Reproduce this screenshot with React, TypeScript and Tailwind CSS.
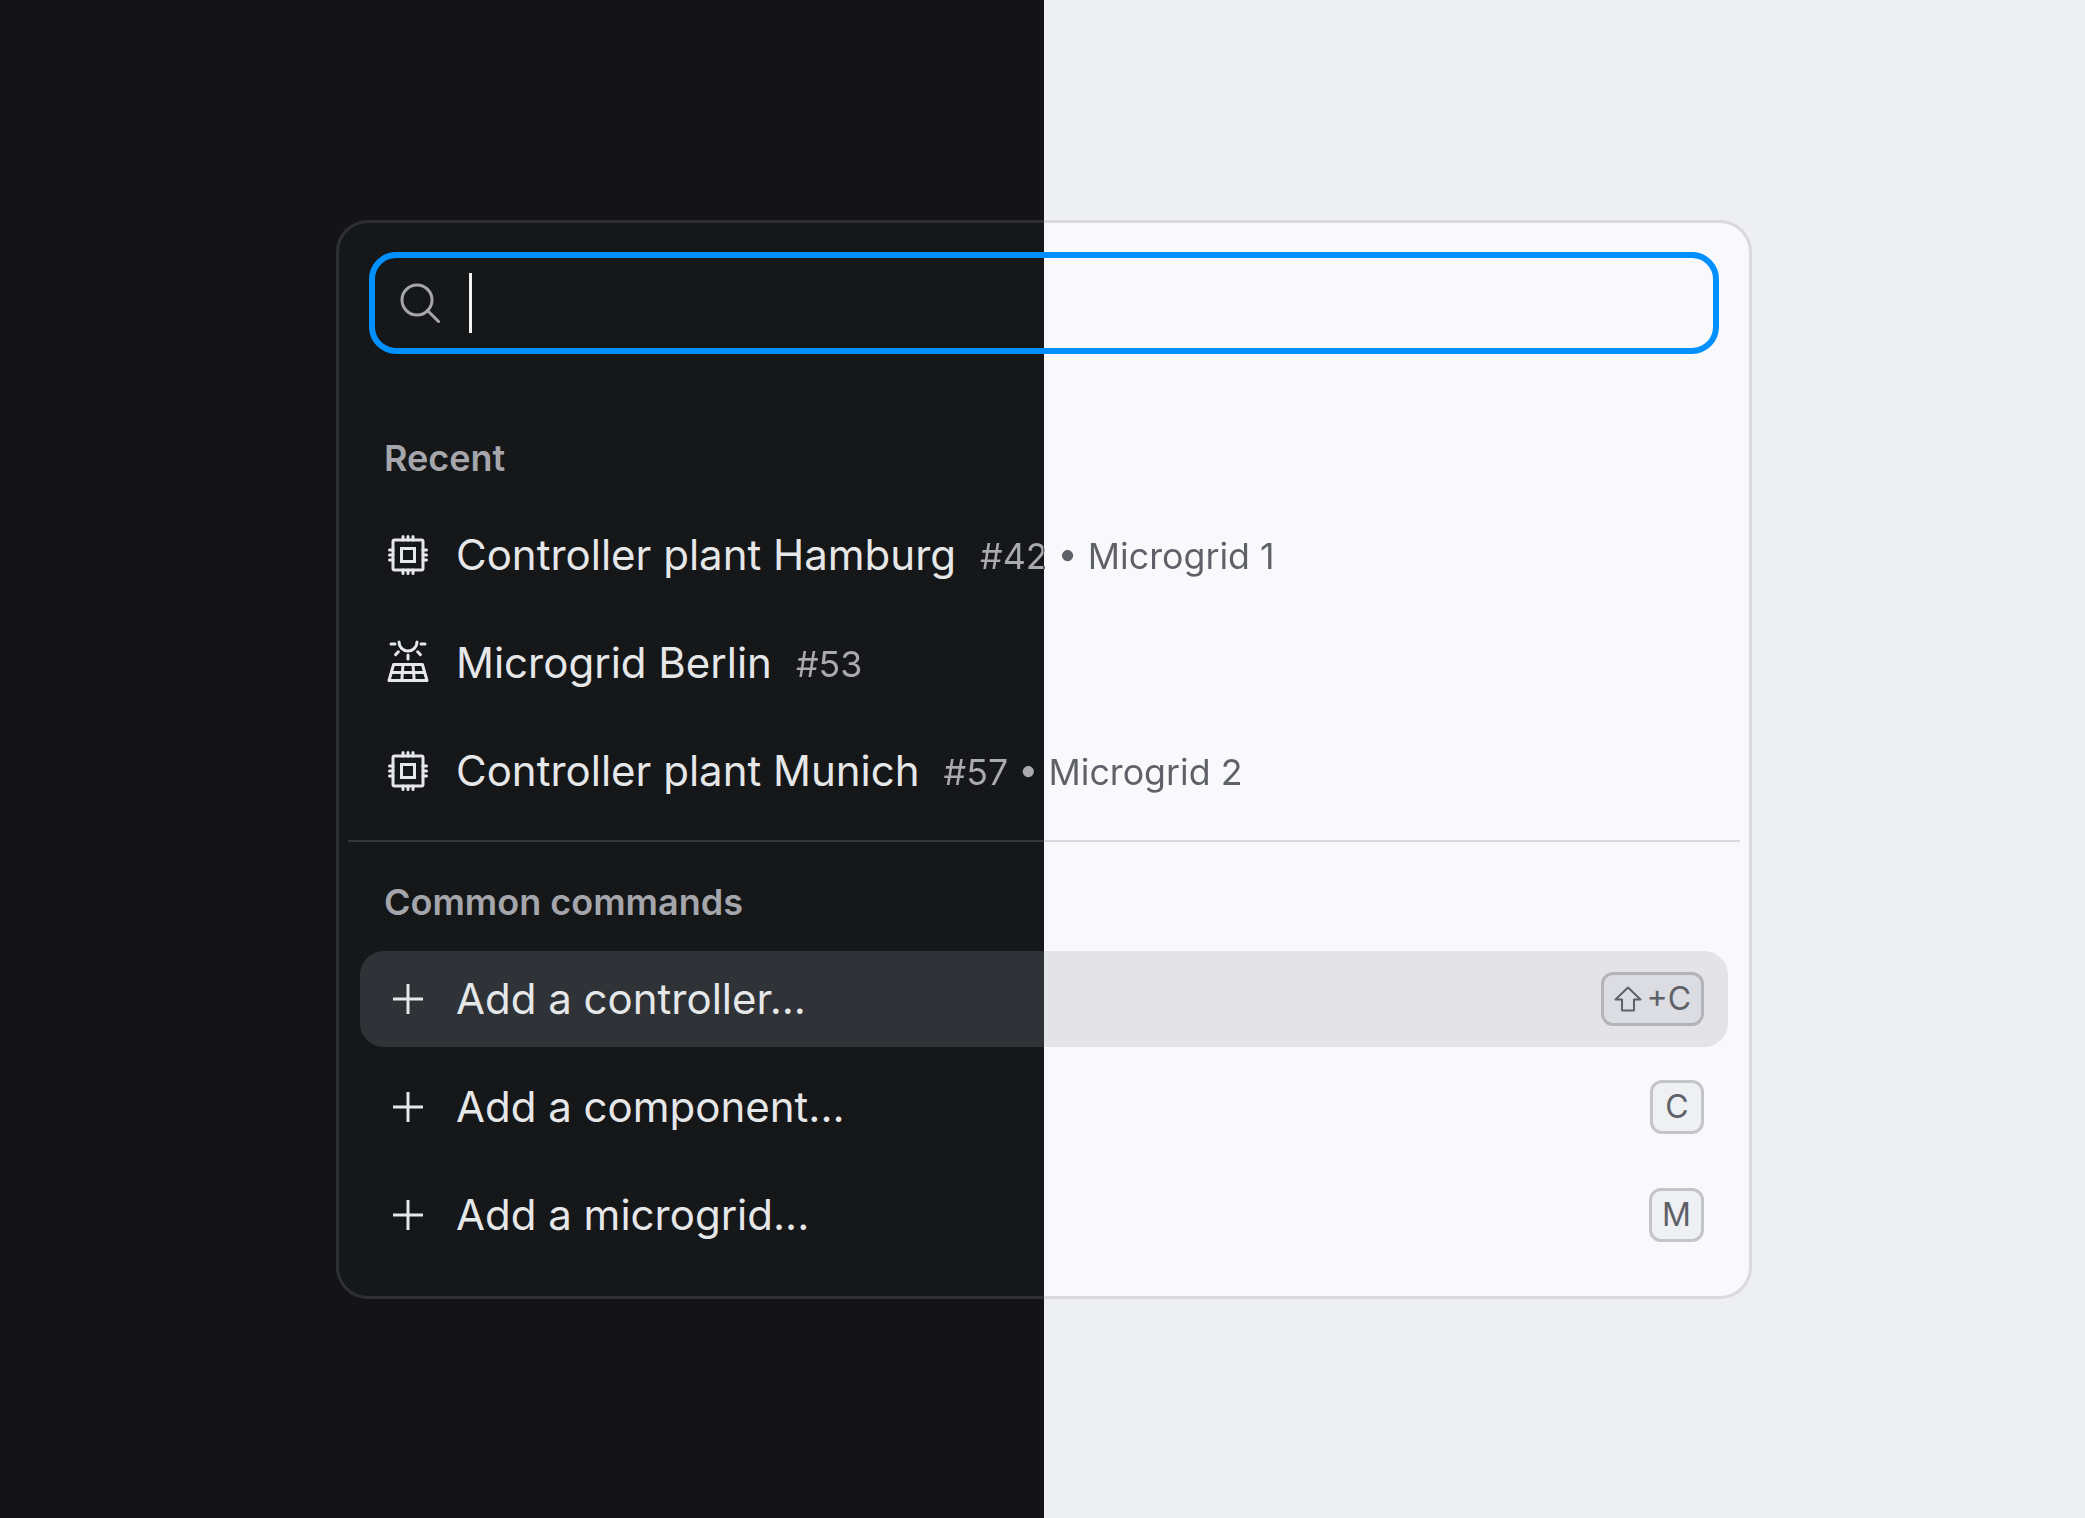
const FONT = "font-['Inter','Noto_Sans',sans-serif]";

function ChipIcon() {
  return (
    <svg viewBox="0 0 24 24" className="h-12 w-12" fill="none" stroke="currentColor" strokeWidth="1.5" strokeLinecap="round">
      <rect x="4.5" y="4.5" width="15" height="15" rx="0.75" />
      <rect x="8.75" y="8.75" width="6.5" height="6.5" />
      <path d="M9.5 2.75v1.75M12 2.75v1.75M14.5 2.75v1.75M9.5 19.5v1.75M12 19.5v1.75M14.5 19.5v1.75M2.75 9.5h1.75M2.75 12h1.75M2.75 14.5h1.75M19.5 9.5h1.75M19.5 12h1.75M19.5 14.5h1.75" />
    </svg>
  );
}

function SolarIcon() {
  return (
    <svg viewBox="0 0 24 24" className="h-12 w-12" fill="none" stroke="currentColor" strokeWidth="1.5" strokeLinecap="round" strokeLinejoin="round">
      <path d="M7.5 1.5a4.5 4.5 0 0 0 9 0M3.5 2.5h2M18.5 2.5h2M5.8 7.8l1.4-1.4M18.2 7.8l-1.4-1.4M12 8v2" />
      <path d="M4.8 12.75h14.4l2.3 8h-19zM3.7 16.75h16.6M9.5 12.75l-.6 8M14.5 12.75l.6 8" />
    </svg>
  );
}

function PlusIcon() {
  return (
    <svg viewBox="0 0 24 24" className="h-12 w-12" fill="none" stroke="currentColor" strokeWidth="1.5">
      <path d="M12 4.5v15M4.5 12h15" />
    </svg>
  );
}

function ShiftIcon() {
  return (
    <svg viewBox="0 0 28 26" className="h-[26px] w-[28px]" fill="none" stroke="currentColor" strokeWidth="2" strokeLinejoin="round">
      <path d="M14 1.5 1.5 13.5H8v11h12v-11h6.5z" />
    </svg>
  );
}

const recent = [
  {
    icon: <ChipIcon />,
    name: "Controller plant Hamburg",
    meta: "#42 • Microgrid 1",
    metaClass: "bg-[linear-gradient(90deg,#a9aab0_63px,#5f6168_63px)]",
  },
  {
    icon: <SolarIcon />,
    name: "Microgrid Berlin",
    meta: "#53",
    metaClass: "bg-[linear-gradient(90deg,#a9aab0,#a9aab0)]",
  },
  {
    icon: <ChipIcon />,
    name: "Controller plant Munich",
    meta: "#57 • Microgrid 2",
    metaClass: "bg-[linear-gradient(90deg,#a9aab0_98px,#5f6168_98px)]",
  },
];

function Kbd({ active, children }: { active?: boolean; children: React.ReactNode }) {
  return (
    <span
      className={`flex h-[54px] min-w-[54px] items-center justify-center gap-[4px] rounded-[12px] border-[3px] px-[10px] text-[32px] text-[#5f6168] ${
        active ? "border-[#b3b4ba] bg-[#dcdde2]" : "border-[#c4c5cb] bg-[#eef0f3]"
      }`}
    >
      {children}
    </span>
  );
}

const commands = [
  { label: "Add a controller...", key: <><ShiftIcon />+C</>, active: true },
  { label: "Add a component...", key: "C", active: false },
  { label: "Add a microgrid...", key: "M", active: false },
];

export default function App() {
  return (
    <div className={`min-h-[1518px] bg-[linear-gradient(90deg,#141416_1044px,#eeeff1_1044px)] pl-[336px] pt-[220px] ${FONT}`}>
      <div className="relative h-[1079px] w-[1416px] rounded-[32px] border-[3px] border-transparent [background:linear-gradient(90deg,#141517_705px,#f9f9fb_705px)_padding-box,linear-gradient(90deg,#2c2f33_708px,#d9d9de_708px)_border-box]">
        {/* dither texture on the dark half */}
        <div className="absolute inset-y-0 left-0 w-[705px] rounded-l-[29px] bg-[radial-gradient(#212224_0.5px,transparent_0.8px),radial-gradient(#212224_0.5px,transparent_0.8px)] bg-[length:4px_4px] bg-[position:0_0,2px_2px]" />
        <div className="relative">
          <div className="px-[30px] pt-[29px]">
            <div className="flex h-[102px] items-center rounded-[27px] border-[6px] border-[#0090ff] pl-[25px]">
              <svg viewBox="0 0 40 40" className="h-10 w-10" fill="none" stroke="#a5a6ac" strokeWidth="3" strokeLinecap="round">
                <circle cx="17" cy="17" r="15" />
                <path d="M27.5 27.5 38.5 38.5" />
              </svg>
              <span className="ml-[29px] h-[60px] w-[3px] bg-[#f2f2f3]" />
            </div>
          </div>

          <div className="px-[21px]">
            <div className="ml-6 mt-[81px] h-12 text-[36px] font-semibold leading-[46px] text-[#a5a6ac]">Recent</div>
            <div className="mt-6 flex flex-col gap-3">
              {recent.map((item) => (
                <div key={item.meta} className="flex h-24 items-center gap-6 px-6 text-[#e6e7e9]">
                  {item.icon}
                  <span className="mb-[2px] text-[42px]">{item.name}</span>
                  <span className={`mt-[4px] bg-clip-text text-[35.75px] text-transparent ${item.metaClass}`}>{item.meta}</span>
                </div>
              ))}
            </div>
          </div>

          <div className="mx-[9px] mt-[21px] h-[2px] bg-[linear-gradient(90deg,#34363a_696px,#dadade_696px)]" />

          <div className="px-[21px]">
            <div className="ml-6 mt-[37px] h-12 text-[36px] font-semibold leading-[46px] text-[#a5a6ac]">Common commands</div>
            <div className="mt-6 flex flex-col gap-3">
              {commands.map((cmd) => (
                <div
                  key={cmd.label}
                  className={`flex h-24 items-center gap-6 rounded-[24px] px-6 text-[#e6e7e9] ${
                    cmd.active ? "bg-[linear-gradient(90deg,#2f3237_684px,#e3e3e8_684px)]" : ""
                  }`}
                >
                  <PlusIcon />
                  <span className="mb-[2px] flex-1 text-[42px]">{cmd.label}</span>
                  <Kbd active={cmd.active}>{cmd.key}</Kbd>
                </div>
              ))}
            </div>
          </div>
        </div>
      </div>
    </div>
  );
}
